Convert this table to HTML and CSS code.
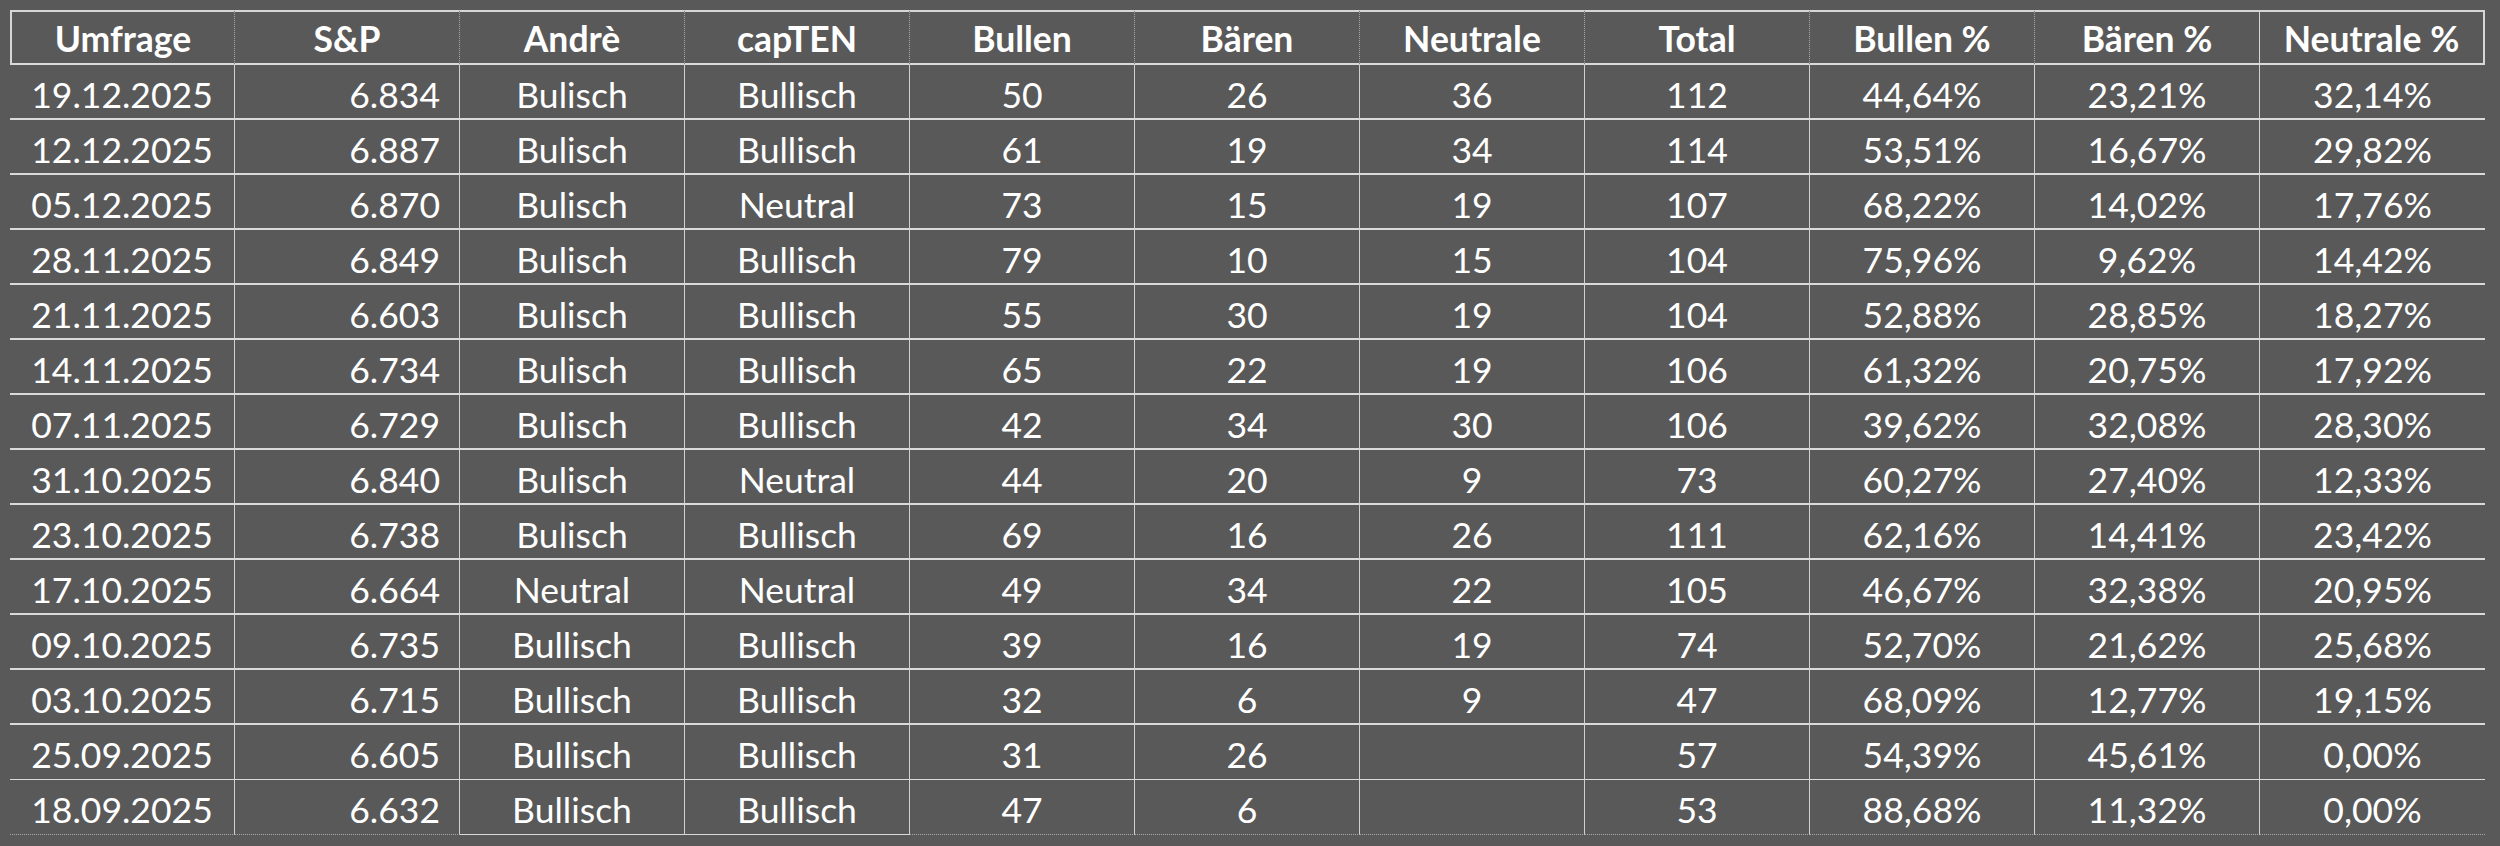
FILE: index.html
```html
<!DOCTYPE html>
<html lang="de">
<head>
<meta charset="utf-8">
<title>Umfrage</title>
<link rel="stylesheet" href="styles.css">
</head>
<body>
<div class="sheet">
  <div class="row head">
    <div class="c first">Umfrage</div><div class="c">S&amp;P</div><div class="c">Andrè</div><div class="c">capTEN</div><div class="c">Bullen</div><div class="c">Bären</div><div class="c">Neutrale</div><div class="c">Total</div><div class="c">Bullen %</div><div class="c solid-r">Bären %</div><div class="c last">Neutrale %</div>
  </div>
  <div class="row"><div class="c">19.12.2025</div><div class="c num">6.834</div><div class="c">Bulisch</div><div class="c">Bullisch</div><div class="c">50</div><div class="c">26</div><div class="c">36</div><div class="c">112</div><div class="c">44,64%</div><div class="c">23,21%</div><div class="c last">32,14%</div></div>
  <div class="row"><div class="c">12.12.2025</div><div class="c num">6.887</div><div class="c">Bulisch</div><div class="c">Bullisch</div><div class="c">61</div><div class="c">19</div><div class="c">34</div><div class="c">114</div><div class="c">53,51%</div><div class="c">16,67%</div><div class="c last">29,82%</div></div>
  <div class="row"><div class="c">05.12.2025</div><div class="c num">6.870</div><div class="c">Bulisch</div><div class="c">Neutral</div><div class="c">73</div><div class="c">15</div><div class="c">19</div><div class="c">107</div><div class="c">68,22%</div><div class="c">14,02%</div><div class="c last">17,76%</div></div>
  <div class="row"><div class="c">28.11.2025</div><div class="c num">6.849</div><div class="c">Bulisch</div><div class="c">Bullisch</div><div class="c">79</div><div class="c">10</div><div class="c">15</div><div class="c">104</div><div class="c">75,96%</div><div class="c">9,62%</div><div class="c last">14,42%</div></div>
  <div class="row"><div class="c">21.11.2025</div><div class="c num">6.603</div><div class="c">Bulisch</div><div class="c">Bullisch</div><div class="c">55</div><div class="c">30</div><div class="c">19</div><div class="c">104</div><div class="c">52,88%</div><div class="c">28,85%</div><div class="c last">18,27%</div></div>
  <div class="row"><div class="c">14.11.2025</div><div class="c num">6.734</div><div class="c">Bulisch</div><div class="c">Bullisch</div><div class="c">65</div><div class="c">22</div><div class="c">19</div><div class="c">106</div><div class="c">61,32%</div><div class="c">20,75%</div><div class="c last">17,92%</div></div>
  <div class="row"><div class="c">07.11.2025</div><div class="c num">6.729</div><div class="c">Bulisch</div><div class="c">Bullisch</div><div class="c">42</div><div class="c">34</div><div class="c">30</div><div class="c">106</div><div class="c">39,62%</div><div class="c">32,08%</div><div class="c last">28,30%</div></div>
  <div class="row"><div class="c">31.10.2025</div><div class="c num">6.840</div><div class="c">Bulisch</div><div class="c">Neutral</div><div class="c">44</div><div class="c">20</div><div class="c">9</div><div class="c">73</div><div class="c">60,27%</div><div class="c">27,40%</div><div class="c last">12,33%</div></div>
  <div class="row"><div class="c">23.10.2025</div><div class="c num">6.738</div><div class="c">Bulisch</div><div class="c">Bullisch</div><div class="c">69</div><div class="c">16</div><div class="c">26</div><div class="c">111</div><div class="c">62,16%</div><div class="c">14,41%</div><div class="c last">23,42%</div></div>
  <div class="row"><div class="c">17.10.2025</div><div class="c num">6.664</div><div class="c">Neutral</div><div class="c">Neutral</div><div class="c">49</div><div class="c">34</div><div class="c">22</div><div class="c">105</div><div class="c">46,67%</div><div class="c">32,38%</div><div class="c last">20,95%</div></div>
  <div class="row"><div class="c">09.10.2025</div><div class="c num">6.735</div><div class="c">Bullisch</div><div class="c">Bullisch</div><div class="c">39</div><div class="c">16</div><div class="c">19</div><div class="c">74</div><div class="c">52,70%</div><div class="c">21,62%</div><div class="c last">25,68%</div></div>
  <div class="row"><div class="c">03.10.2025</div><div class="c num">6.715</div><div class="c">Bullisch</div><div class="c">Bullisch</div><div class="c">32</div><div class="c">6</div><div class="c">9</div><div class="c">47</div><div class="c">68,09%</div><div class="c">12,77%</div><div class="c last">19,15%</div></div>
  <div class="row thin"><div class="c">25.09.2025</div><div class="c num">6.605</div><div class="c">Bullisch</div><div class="c">Bullisch</div><div class="c">31</div><div class="c">26</div><div class="c"></div><div class="c">57</div><div class="c">54,39%</div><div class="c">45,61%</div><div class="c last">0,00%</div></div>
  <div class="row end"><div class="c">18.09.2025</div><div class="c num">6.632</div><div class="c boxed">Bullisch</div><div class="c boxed">Bullisch</div><div class="c">47</div><div class="c">6</div><div class="c"></div><div class="c">53</div><div class="c">88,68%</div><div class="c">11,32%</div><div class="c last">0,00%</div></div>
</div>
</body>
</html>
```
FILE: styles.css
```css
html, body {
  margin: 0;
  padding: 0;
  background: #595959;
  width: 2500px;
  height: 846px;
  overflow: hidden;
}
body {
  padding: 10px 0 0 10px;
  box-sizing: border-box;
  font-family: Lato, "Open Sans", sans-serif;
  color: #ffffff;
}
.sheet {
  display: flex;
  flex-direction: column;
  width: 2475px;
}
.row {
  display: grid;
  grid-template-columns: repeat(11, 225px);
  height: 55px;
}
.c {
  box-sizing: border-box;
  display: flex;
  align-items: center;
  justify-content: center;
  padding-top: 6px;
  font-size: 35.5px;
  line-height: 1;
  white-space: nowrap;
  border-right: 1px solid #d0d0d0;
  border-bottom: 2px solid #dadada;
}
.row.thin .c {
  border-bottom-width: 1px;
}
.c.num {
  justify-content: flex-end;
  padding-right: 19px;
}
.c.last {
  border-right: 0;
}
.head .c {
  font-weight: 700;
  border-top: 2px solid #d6d6d6;
  border-bottom: 2px solid #dadada;
  border-right: 1px dotted #a8a8a8;
  padding-top: 3px;
}
.head .c.first {
  border-left: 2px solid #d6d6d6;
}
.head .c.solid-r {
  border-right: 1px solid #d6d6d6;
}
.head .c.last {
  border-right: 2px solid #d6d6d6;
}
.end .c {
  border-bottom: 1px dotted #a8a8a8;
}
.end .c.boxed {
  border-bottom: 1px solid #d9d9d9;
}
```
